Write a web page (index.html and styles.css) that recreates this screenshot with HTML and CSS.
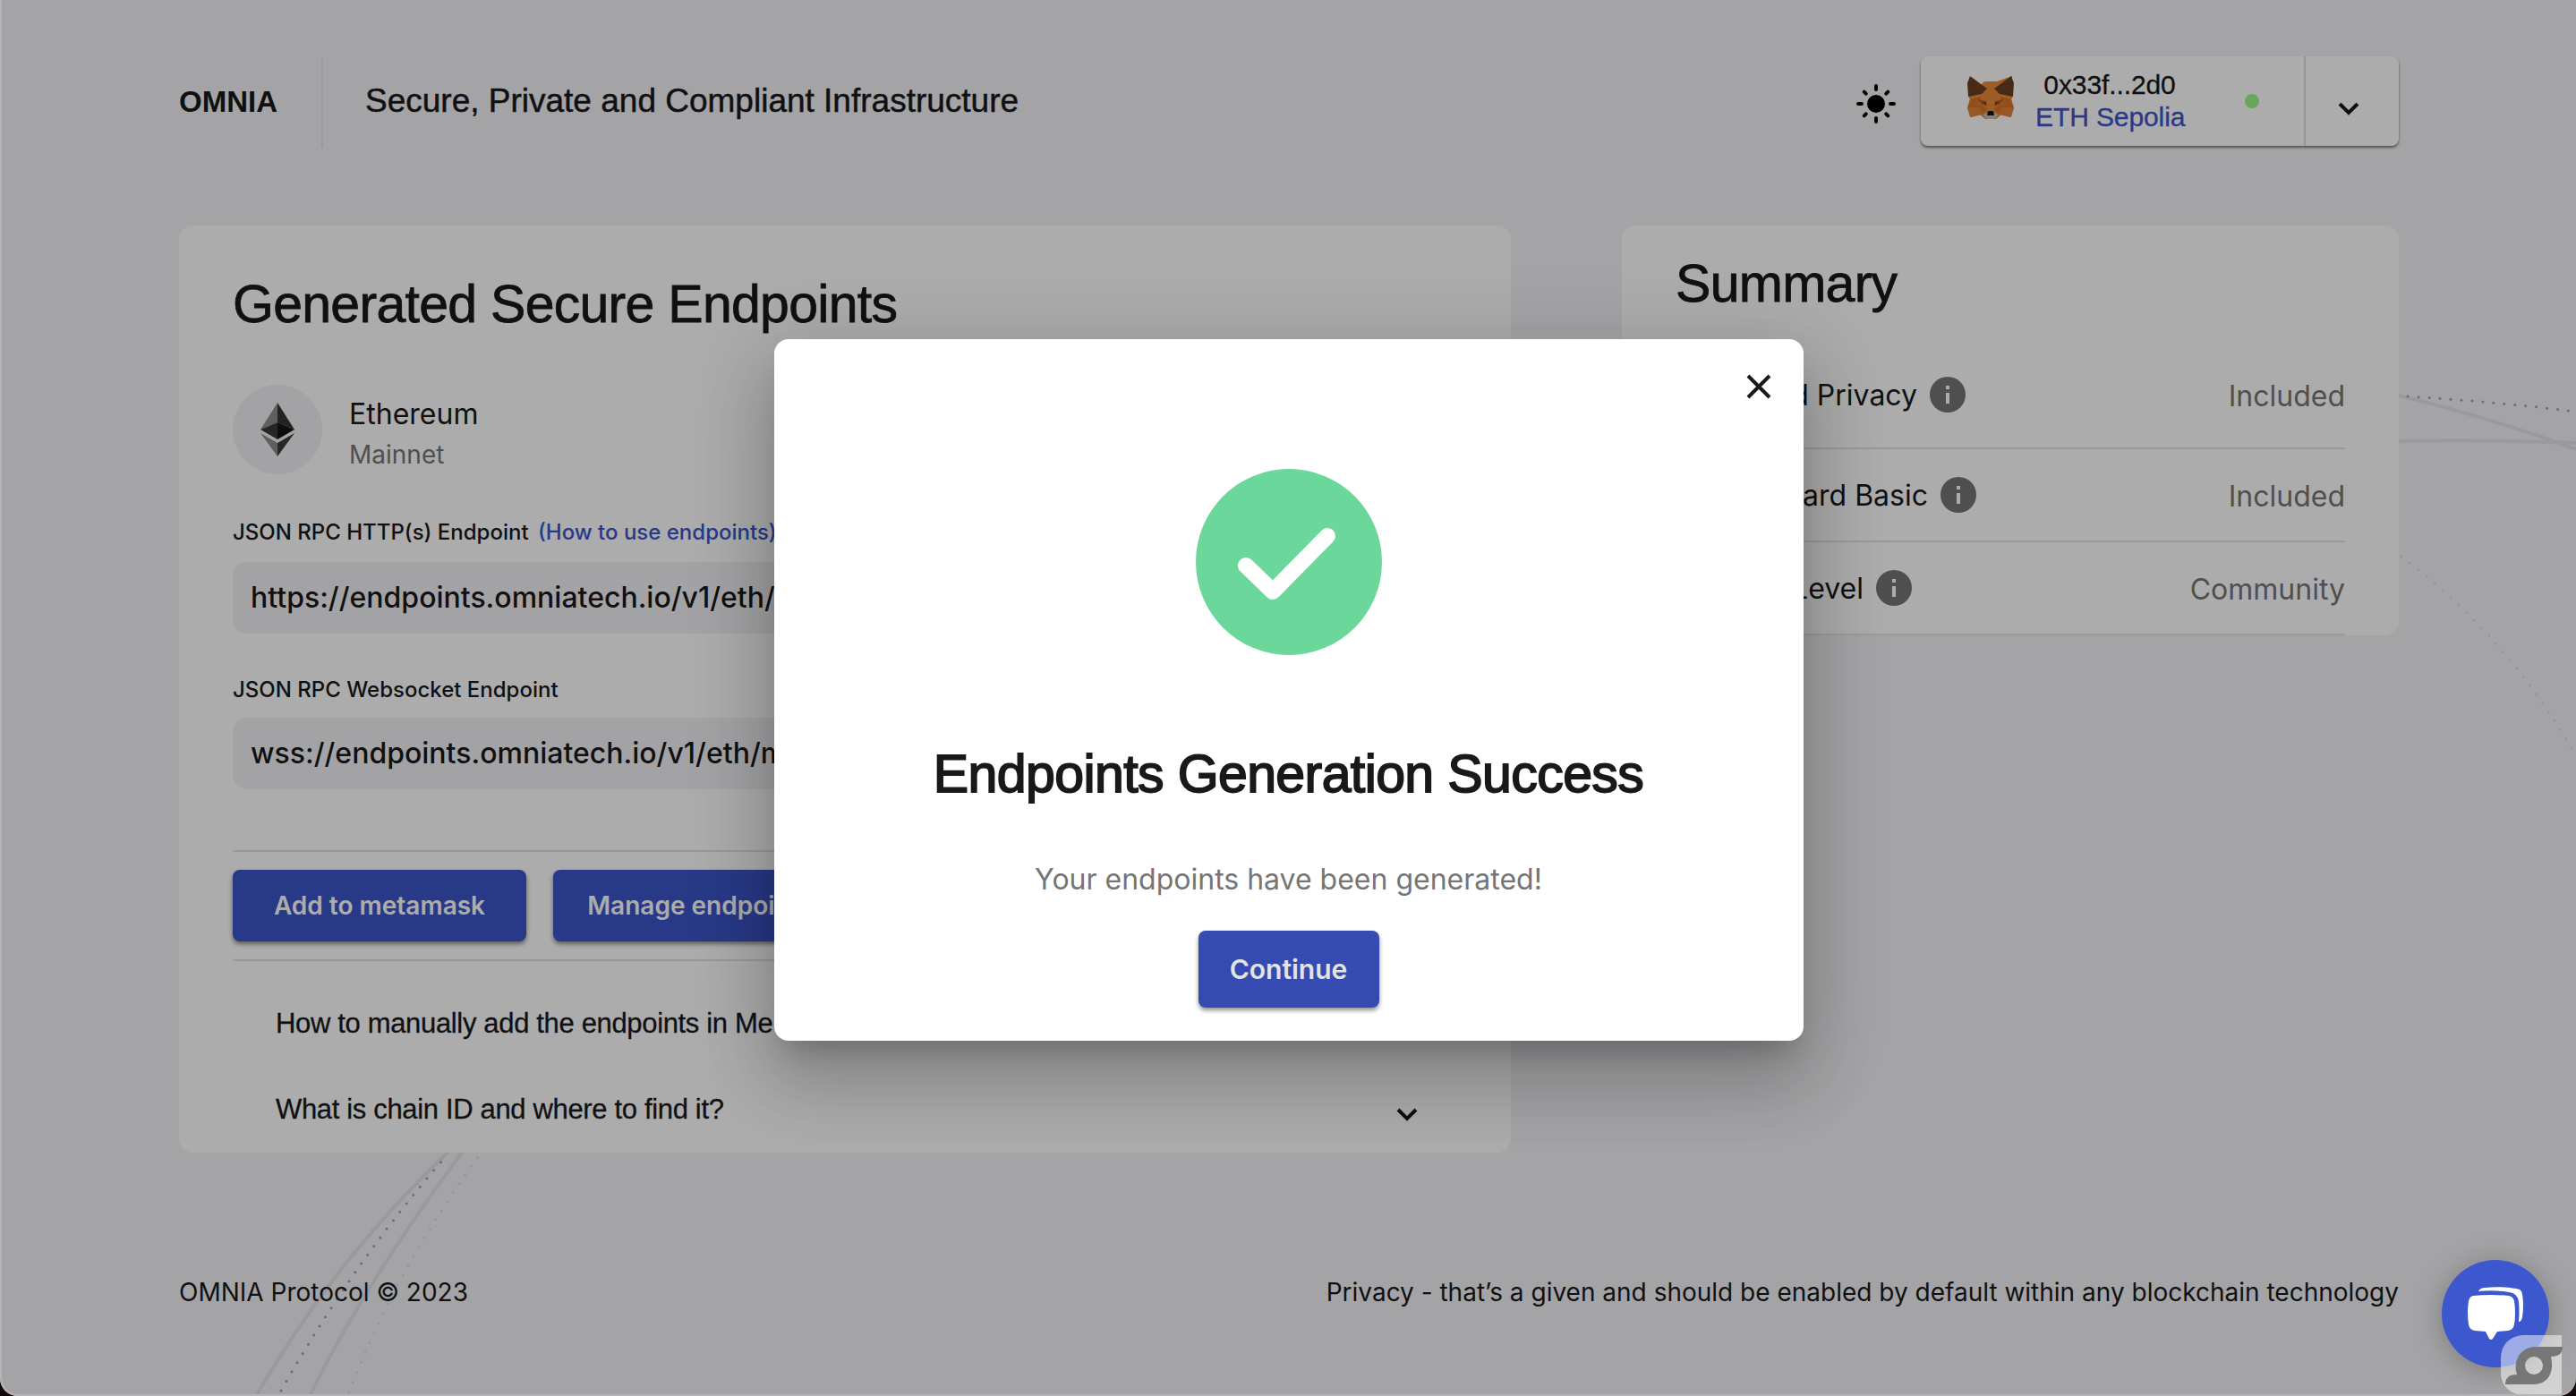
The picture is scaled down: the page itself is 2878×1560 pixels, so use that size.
FILE: index.html
```
<!DOCTYPE html>
<html lang="en">
<head>
    <meta charset="UTF-8">
    <meta name="viewport" content="width=device-width, initial-scale=1.0">
    <title>OMNIA Protocol</title>
    <link rel="stylesheet" href="styles.css">
</head>
<body>
    <svg class="bg-lines" viewBox="0 0 2878 1560" fill="none">
        <path class="curve" d="M286 1560C350 1450 415 1370 500 1288"/>
        <path class="curve" d="M346 1560C395 1460 455 1370 516 1288"/>
        <path class="dots dark" d="M314 1554C370 1455 430 1370 500 1290"/>
        <path class="dots" d="M390 1556C430 1450 485 1360 536 1290"/>
        <path class="curve" d="M2680 442Q2780 466 2878 502"/>
        <path class="curve" d="M2680 493Q2780 491 2878 495"/>
        <path class="dots dark" d="M2690 443Q2790 449 2878 460"/>
        <path class="dots" d="M2683 622Q2800 710 2874 838"/>
    </svg>

    <div class="page">
        <header class="header">
            <div class="logo">OMNIA</div>
            <div class="tagline"><span>Secure, Private and Compliant Infrastructure</span></div>
            <svg class="sun" viewBox="0 0 44 44">
                <circle cx="22" cy="22" r="10"/>
                <path d="M22 2v4M22 38v4M2 22h4M38 22h4M8.700 8.700l2 2M33.300 33.300l2 2M8.700 35.300l2-2M33.300 10.700l2-2" stroke="#000" stroke-width="4" stroke-linecap="round"/>
            </svg>
            <div class="wallet">
                <div class="wallet-main">
                    <svg class="fox" viewBox="0 0 52 50">
                        <path fill="#e88a35" d="M19 7h14L50 1l1 23-2 3 3 10-3 10-11-3-6 5H20l-6-5-11 3L0 37l3-10-2-3z"/>
                        <path fill="#6b3f22" d="M3 1l19 14-6 6-15 3L0 9zM49 1L30 15l6 6 15 3 1-15z"/>
                        <path fill="#d8732b" d="M0 37l3-10 13-3-3 8 9 5-4 7zM52 37l-3-10-13-3 3 8-9 5 4 7z"/>
                        <path fill="#e0803a" d="M1 36h12l4 8-13 3zM51 36H39l-4 8 13 3z"/>
                        <path fill="#b9571f" d="M12 27l9 2 1 5-6-1zM40 27l-9 2-1 5 6-1z"/>
                        <path fill="#2b3136" d="M17 30l4 1v2zM35 30l-4 1v2z"/>
                        <path fill="#cbbfb3" d="M17 44l6-2h6l6 2-5 5h-8z"/>
                        <path fill="#161616" d="M23 40h6l1 5h-8z"/>
                    </svg>
                    <div class="account">
                        <div>0x33f...2d0</div>
                        <div class="network">ETH Sepolia</div>
                    </div>
                    <span class="status"></span>
                </div>
                <div class="wallet-toggle">
                    <svg class="chevron" viewBox="0 0 24 16"><path d="M2 3l10 10L22 3"/></svg>
                </div>
            </div>
        </header>

        <main class="content">
            <section class="card endpoints">
                <h1>Generated Secure Endpoints</h1>
                <div class="chain">
                    <div class="chain-icon">
                        <svg viewBox="0 0 38 60">
                            <path fill="#8c8c8c" d="M19 0L0 30l19-8z"/>
                            <path fill="#343434" d="M19 0l19 30-19-8z"/>
                            <path fill="#393939" d="M0 30l19-8v19z"/>
                            <path fill="#141414" d="M38 30l-19-8v19z"/>
                            <path fill="#8c8c8c" d="M0 34l19 11v15z"/>
                            <path fill="#3c3c3b" d="M38 34L19 45v15z"/>
                        </svg>
                    </div>
                    <div>
                        <div class="chain-name">Ethereum</div>
                        <div class="chain-net">Mainnet</div>
                    </div>
                </div>
                <div class="label">JSON RPC HTTP(s) Endpoint <a>(How to use endpoints)</a></div>
                <div class="url">https://endpoints.omniatech.io/v1/eth/</div>
                <div class="label second">JSON RPC Websocket Endpoint</div>
                <div class="url">wss://endpoints.omniatech.io/v1/eth/m</div>
                <div class="actions">
                    <button class="btn add">Add to metamask</button>
                    <button class="btn manage">Manage endpoints</button>
                </div>
                <div class="questions">
                    <div class="question">How to manually add the endpoints in Me</div>
                    <div class="question">
                        What is chain ID and where to find it?
                        <svg class="chevron" viewBox="0 0 24 16"><path d="M2 3l10 10L22 3"/></svg>
                    </div>
                </div>
            </section>

            <section class="card summary">
                <h1>Summary</h1>
                <div class="row first">
                    <span class="feature f1">d Privacy</span>
                    <svg class="info" viewBox="0 0 40 40"><circle cx="20" cy="20" r="20"/><path d="M18 10h4v4h-4zM18 18h4v12h-4z"/></svg>
                    <span class="value">Included</span>
                </div>
                <div class="row">
                    <span class="feature f2">ard Basic</span>
                    <svg class="info" viewBox="0 0 40 40"><circle cx="20" cy="20" r="20"/><path d="M18 10h4v4h-4zM18 18h4v12h-4z"/></svg>
                    <span class="value">Included</span>
                </div>
                <div class="row">
                    <span class="feature f3">Level</span>
                    <svg class="info" viewBox="0 0 40 40"><circle cx="20" cy="20" r="20"/><path d="M18 10h4v4h-4zM18 18h4v12h-4z"/></svg>
                    <span class="value">Community</span>
                </div>
            </section>
        </main>

        <footer class="footer">
            <span class="copyright">OMNIA Protocol © 2023</span>
            <span class="motto">Privacy - that’s a given and should be enabled by default within any blockchain technology</span>
        </footer>
    </div>

    <div class="overlay">
        <div class="modal">
            <svg class="close" viewBox="0 0 28 28"><path d="M2 2l24 24M26 2L2 26"/></svg>
            <svg class="check" viewBox="0 0 208 208">
                <circle cx="104" cy="104" r="104"/>
                <path d="M56 108l30 29 61-62"/>
            </svg>
            <h2>Endpoints Generation Success</h2>
            <p>Your endpoints have been generated!</p>
            <button class="btn continue">Continue</button>
        </div>
    </div>

    <div class="chat">
        <svg viewBox="0 0 62 60">
            <path d="M6 10Q26 8 46 10Q51 11 52 16Q54 29 52 42Q51 48 45 49L33 50L28 58Q26 60 24 58L20 50L8 49Q2 48 1 42Q-1 29 1 16Q2 11 6 10z"/>
            <path d="M12 5Q14 1 19 1Q36-1 54 2Q60 2 61 8Q63 21 61 34Q60 39 57 39Q58 26 57 17Q56 7 46 6Q30 3 12 5z"/>
        </svg>
    </div>
    <svg class="recorder" viewBox="0 0 70 67">
        <path fill="#fff" fill-opacity=".5" d="M27 0h41v67H27C10 67 0 56 0 42V26C0 10 11 0 27 0z"/>
        <path fill="#777" fill-rule="evenodd" d="M39 13h30c0 7-4 11-13 11 4 17-3 31-19 31H5c0-8 5-11 13-11C13 29 22 13 39 13zM37 24a10 10 0 1 0 0 20 10 10 0 0 0 0-20z"/>
    </svg>
    <div class="window-edge"></div>
</body>
</html>
```
FILE: styles.css
```
* {
    box-sizing: border-box;
}
body {
    margin: 0;
    width: 2878px;
    height: 1560px;
    overflow: hidden;
    position: relative;
    background: #f2f2f5;
    color: #18191b;
    font-family: Inter, sans-serif;
}
h1, h2, p {
    margin: 0;
}
.bg-lines {
    position: absolute;
    inset: 0;
}
.curve {
    stroke: #e4e4e7;
    stroke-width: 4;
}
.dots {
    stroke: #dedee2;
    stroke-width: 3;
    stroke-linecap: round;
    stroke-dasharray: 0 12;
}
.dots.dark {
    stroke: #9f9fa8;
}
.page {
    position: relative;
    padding: 63px 198px 0 200px;
}
.header {
    display: flex;
    align-items: center;
    height: 102px;
}
.logo {
    width: 159px;
    font-family: "Liberation Sans", sans-serif;
    font-size: 33px;
    font-weight: bold;
}
.tagline {
    flex: 1;
    height: 102px;
    line-height: 99px;
    padding-left: 47px;
    border-left: 2px solid #e4e4e6;
    font-family: "Liberation Sans", sans-serif;
    font-size: 37px;
    -webkit-text-stroke: .500px #18191b;
}
.sun {
    width: 44px;
    height: 44px;
    margin: 4px 28px 0 0;
}
.wallet {
    display: flex;
    width: 534px;
    height: 100px;
    margin-bottom: 2px;
    background: #fefefe;
    border-radius: 8px;
    box-shadow: 0 2px 3px rgba(0, 0, 0, .5);
}
.wallet-main {
    width: 430px;
    display: flex;
    align-items: center;
    border-right: 2px solid #dedede;
    padding-left: 52px;
}
.fox {
    width: 52px;
    height: 50px;
    margin-bottom: 8px;
}
.account {
    width: 166px;
    margin-left: 24px;
    text-align: center;
    font-family: "Liberation Sans", sans-serif;
    font-size: 30px;
    line-height: 36px;
    letter-spacing: -.1px;
    white-space: nowrap;
    -webkit-text-stroke: .300px;
}
.network {
    color: #3c54c7;
}
.status {
    width: 16px;
    height: 16px;
    margin-left: 68px;
    border-radius: 50%;
    background: #9af489;
}
.wallet-toggle {
    width: 104px;
    display: flex;
    justify-content: center;
    align-items: center;
    padding: 16px 8px 0 0;
}
.chevron {
    width: 24px;
    height: 16px;
    fill: none;
    stroke: #18191b;
    stroke-width: 4;
}
.content {
    display: flex;
    justify-content: space-between;
    align-items: flex-start;
    padding-top: 87px;
}
.card {
    background: #fefefe;
    border-radius: 16px;
    padding: 0 60px;
}
.card h1 {
    font-family: "Liberation Sans", sans-serif;
    font-weight: normal;
    font-size: 59px;
    line-height: 68px;
    letter-spacing: -.72px;
    -webkit-text-stroke: .800px #18191b;
}
.endpoints {
    width: 1488px;
    height: 1036px;
    padding-top: 54px;
}
.chain {
    display: flex;
    align-items: center;
    height: 100px;
    margin-top: 56px;
}
.chain-icon {
    display: flex;
    justify-content: center;
    align-items: center;
    width: 100px;
    height: 100px;
    margin-right: 30px;
    border-radius: 50%;
    background: #f1f1f4;
}
.chain-icon svg {
    width: 38px;
    height: 60px;
}
.chain-name {
    font-size: 32px;
    line-height: 48px;
    margin-top: 8px;
}
.chain-net {
    font-size: 28px;
    line-height: 42px;
    color: #757575;
}
.label {
    margin-top: 48px;
    font-size: 24px;
    line-height: 34px;
    font-weight: 500;
}
.label.second {
    margin-top: 46px;
}
.label a {
    margin-left: 4px;
    color: #3c54c7;
}
.url {
    height: 80px;
    margin-top: 16px;
    padding: 0 20px;
    border-radius: 16px;
    background: #f1f1f4;
    font-size: 32px;
    font-weight: 500;
    line-height: 79px;
}
.second + .url {
    margin-top: 14px;
}
.actions {
    display: flex;
    gap: 30px;
    height: 124px;
    margin-top: 68px;
    padding-top: 20px;
    border-top: 2px solid #e0e0e0;
    border-bottom: 2px solid #e0e0e0;
}
.btn {
    height: 80px;
    border: 0;
    padding: 0;
    border-radius: 8px;
    background: #3c54c7;
    color: #fefefe;
    font-family: Inter, sans-serif;
    font-size: 28px;
    font-weight: 600;
    box-shadow: 0 3px 5px rgba(0, 0, 0, .45);
}
.add {
    width: 328px;
}
.manage {
    width: 328px;
}
.questions {
    padding-top: 22px;
}
.question {
    display: flex;
    justify-content: space-between;
    align-items: center;
    height: 96px;
    padding: 0 44px 0 48px;
    font-family: "Liberation Sans", sans-serif;
    font-size: 31px;
    letter-spacing: -.34px;
    -webkit-text-stroke: .300px #18191b;
}
.question .chevron {
    margin-top: 10px;
}
.summary {
    width: 868px;
    height: 458px;
    padding-top: 31px;
}
.row {
    display: flex;
    align-items: center;
    height: 104px;
    border-bottom: 2px solid #e3e3e7;
    font-size: 32px;
}
.row.first {
    margin-top: 31px;
    height: 120px;
}
.feature {
    text-align: right;
    white-space: nowrap;
}
.f1 {
    width: 270px;
}
.f2 {
    width: 282px;
}
.f3 {
    width: 210px;
}
.info {
    width: 40px;
    height: 40px;
    margin: 0 0 1px 14px;
    fill: #757575;
}
.info path {
    fill: #fefefe;
}
.value {
    margin-left: auto;
    padding-top: 2px;
    color: #757575;
}
.footer {
    display: flex;
    justify-content: space-between;
    margin-top: 137px;
    font-size: 28px;
    line-height: 38px;
}
.overlay {
    position: absolute;
    inset: 0;
    display: flex;
    justify-content: center;
    padding: 379px 0 0 1px;
    background: rgba(0, 0, 0, .32);
}
.modal {
    position: relative;
    width: 1150px;
    height: 784px;
    padding-top: 145px;
    display: flex;
    flex-direction: column;
    align-items: center;
    border-radius: 16px;
    background: #fff;
    box-shadow: 0 22px 30px -14px rgba(0, 0, 0, .2), 0 48px 76px 6px rgba(0, 0, 0, .14), 0 18px 92px 16px rgba(0, 0, 0, .12);
}
.close {
    position: absolute;
    top: 39px;
    right: 36px;
    width: 28px;
    height: 28px;
    stroke: #18191b;
    stroke-width: 4;
}
.check {
    width: 208px;
    height: 208px;
    fill: #6cd79b;
}
.check path {
    fill: none;
    stroke: #fff;
    stroke-width: 18;
    stroke-linecap: round;
    stroke-linejoin: round;
}
.modal h2 {
    margin-top: 99px;
    font-family: "Liberation Sans", sans-serif;
    font-size: 59px;
    line-height: 68px;
    font-weight: normal;
    letter-spacing: -.6px;
    -webkit-text-stroke: 1.800px #18191b;
}
.modal p {
    margin-top: 60px;
    font-size: 32px;
    line-height: 48px;
    color: #757575;
}
.continue {
    width: 202px;
    height: 86px;
    margin-top: 33px;
    font-size: 30px;
    background: #354bb2;
    color: #e3e3e0;
}
.chat {
    position: absolute;
    left: 2728px;
    top: 1408px;
    width: 120px;
    height: 120px;
    padding: 30px 0 0 29px;
    border-radius: 50%;
    background: #3d57cf;
    box-shadow: 0 4px 32px rgba(0, 0, 0, .25);
}
.chat svg {
    width: 62px;
    height: 60px;
    fill: #fff;
}
.recorder {
    position: absolute;
    left: 2794px;
    top: 1492px;
    width: 70px;
    height: 67px;
}
.window-edge {
    position: absolute;
    inset: 0;
    border-left: 2px solid #b5b5b7;
    border-bottom: 2px solid #b5b5b7;
    border-radius: 0 0 20px 20px;
    box-shadow: 0 0 0 20px #100808;
}
```
